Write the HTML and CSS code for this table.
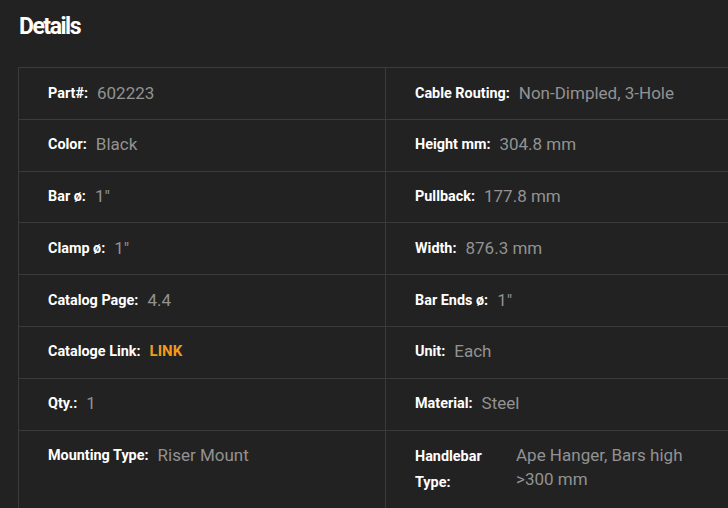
FILE: index.html
```html
<!DOCTYPE html>
<html>
<head>
<meta charset="utf-8">
<link rel="stylesheet" href="styles.css">
</head>
<body>
<section class="details">
  <h2 class="title">Details</h2>
  <div class="table">
    <div class="cell"><span class="label">Part#:</span><span class="value">602223</span></div>
    <div class="cell"><span class="label">Cable Routing:</span><span class="value">Non-Dimpled, 3-Hole</span></div>
    <div class="cell"><span class="label">Color:</span><span class="value">Black</span></div>
    <div class="cell"><span class="label">Height mm:</span><span class="value">304.8 mm</span></div>
    <div class="cell"><span class="label">Bar ø:</span><span class="value">1"</span></div>
    <div class="cell"><span class="label">Pullback:</span><span class="value">177.8 mm</span></div>
    <div class="cell"><span class="label">Clamp ø:</span><span class="value">1"</span></div>
    <div class="cell"><span class="label">Width:</span><span class="value">876.3 mm</span></div>
    <div class="cell"><span class="label">Catalog Page:</span><span class="value">4.4</span></div>
    <div class="cell"><span class="label">Bar Ends ø:</span><span class="value">1"</span></div>
    <div class="cell"><span class="label">Cataloge Link:</span><a class="value link" href="#">LINK</a></div>
    <div class="cell"><span class="label">Unit:</span><span class="value">Each</span></div>
    <div class="cell"><span class="label">Qty.:</span><span class="value">1</span></div>
    <div class="cell"><span class="label">Material:</span><span class="value">Steel</span></div>
    <div class="cell"><span class="label">Mounting Type:</span><span class="value">Riser Mount</span></div>
    <div class="cell"><span class="label label-wrap">Handlebar Type:</span><span class="value">Ape Hanger, Bars high &gt;300 mm</span></div>
  </div>
</section>
</body>
</html>
```
FILE: styles.css
```css
html, body {
  margin: 0;
  padding: 0;
  background: #222222;
  overflow: hidden;
}
body {
  font-family: Roboto, "Liberation Sans", Arial, sans-serif;
  color: #ffffff;
}
.details {
  padding: 13px 0 0 18px;
  width: 760px;
}
.title {
  margin: 0 0 26px 1px;
  font-size: 23px;
  line-height: 28px;
  font-weight: 700;
  letter-spacing: -1.5px;
  color: #ffffff;
}
.table {
  display: grid;
  grid-template-columns: 367px 367px;
  border-top: 1px solid #3b3b3b;
  border-left: 1px solid #3b3b3b;
  width: 735px;
}
.cell {
  display: flex;
  align-items: flex-start;
  gap: 9px;
  padding: 13.5px 29px;
  border-right: 1px solid #3b3b3b;
  border-bottom: 1px solid #3b3b3b;
}
.label {
  display: block;
  font-size: 14.4px;
  line-height: 23.8px;
  font-weight: 700;
  color: #ffffff;
  white-space: nowrap;
}
.label-wrap {
  white-space: normal;
  width: 92px;
  flex: none;
  line-height: 26px;
}
.value {
  display: block;
  font-size: 17px;
  line-height: 23.8px;
  color: #929292;
}
.link {
  color: #f39a1d;
  font-size: 15px;
  font-weight: 700;
  text-decoration: none;
}
```
